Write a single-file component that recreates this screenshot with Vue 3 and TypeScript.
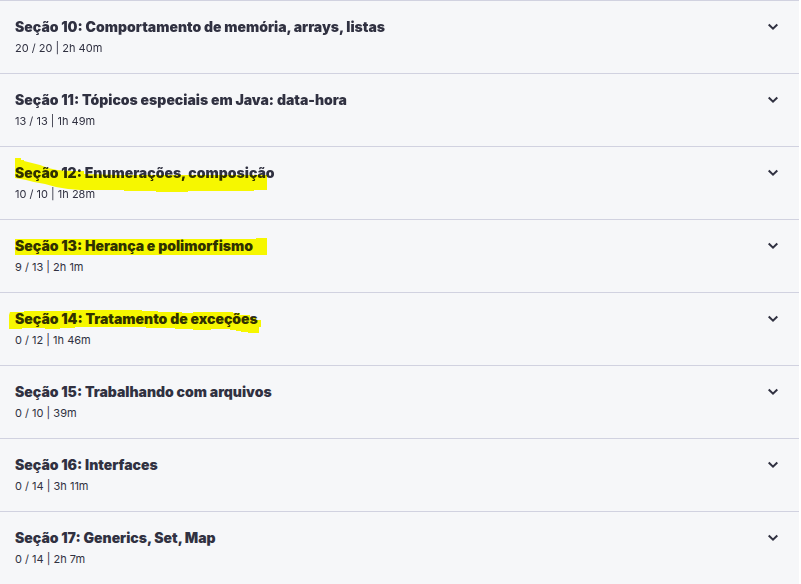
<script setup lang="ts">
import { ref } from 'vue'

interface Section {
  number: number
  title: string
  progress: string
  marker?: string
}

// Marker outlines are measured from the top-left corner of their row.
const sections: Section[] = [
  { number: 10, title: 'Comportamento de memória, arrays, listas', progress: '20 / 20 | 2h 40m' },
  { number: 11, title: 'Tópicos especiais em Java: data-hora', progress: '13 / 13 | 1h 49m' },
  {
    number: 12,
    title: 'Enumerações, composição',
    progress: '10 / 10 | 1h 28m',
    marker:
      'M15 11H21V13H24V14L32 16L40 18L48 21L57 23L70 24H84V27L120 28H267V43H254V44H188V45H156V44H124V43H80L68 42L56 40L45 37L34 35L26 33L15 31Z',
  },
  {
    number: 13,
    title: 'Herança e polimorfismo',
    progress: '9 / 13 | 2h 1m',
    marker: 'M15 19H256V18H267V35H15Z',
  },
  {
    number: 14,
    title: 'Tratamento de exceções',
    progress: '0 / 12 | 1h 46m',
    marker:
      'M10 19H24V18H72V17H142V18H158V19H182V20H193V19H233V20H240V22H250V24H256V27H261V34H259V40H248V39H241V38H236V37H230V36H211V37H193V36H175V35H146V34H75V35H60V36H45V35H22V36L9 36V22Z',
  },
  { number: 15, title: 'Trabalhando com arquivos', progress: '0 / 10 | 39m' },
  { number: 16, title: 'Interfaces', progress: '0 / 14 | 3h 11m' },
  { number: 17, title: 'Generics, Set, Map', progress: '0 / 14 | 2h 7m' },
]

const selected = ref<number | null>(null)

function select(number: number): void {
  selected.value = selected.value === number ? null : number
}
</script>

<template>
  <main class="curriculum">
    <section v-for="section in sections" :key="section.number" class="section">
      <button
        type="button"
        class="toggle"
        :aria-expanded="selected === section.number"
        @click="select(section.number)"
      >
        <span class="text">
          <span class="title">Seção {{ section.number }}: {{ section.title }}</span>
          <span class="progress">{{ section.progress }}</span>
        </span>
        <svg class="chevron" viewBox="0 0 12 8" aria-hidden="true">
          <path d="M1.7 1.5L6 5.7L10.3 1.5" />
        </svg>
      </button>
      <svg v-if="section.marker" class="marker" viewBox="0 0 280 72" aria-hidden="true">
        <path :d="section.marker" />
      </svg>
    </section>
  </main>
</template>

<style>
body {
  margin: 0;
  background: #fff;
}
</style>

<style scoped>
.curriculum {
  padding-right: 2px;
  font-family: Inter, "Liberation Sans", Arial, sans-serif;
  color: #303141;
}

.section {
  position: relative;
  border-top: 1px solid #d1d2e0;
  background: #f6f7f9;
}

.toggle {
  display: flex;
  align-items: flex-start;
  justify-content: space-between;
  gap: 16px;
  width: 100%;
  padding: 16px 20px 14px 15px;
  border: 0;
  background: transparent;
  color: inherit;
  font: inherit;
  text-align: left;
  cursor: pointer;
}

.text {
  display: flex;
  flex-direction: column;
  min-width: 0;
}

.title {
  font-size: 14px;
  font-weight: 900;
  line-height: 20px;
}

.progress {
  font-size: 11px;
  line-height: 22px;
}

.chevron {
  flex: none;
  width: 12px;
  height: 8px;
  margin-top: 6px;
  fill: none;
  stroke: currentColor;
  stroke-width: 2;
}

.marker {
  position: absolute;
  top: 0;
  left: 0;
  width: 280px;
  height: 72px;
  fill: #ffff00;
  mix-blend-mode: multiply;
  pointer-events: none;
}
</style>
